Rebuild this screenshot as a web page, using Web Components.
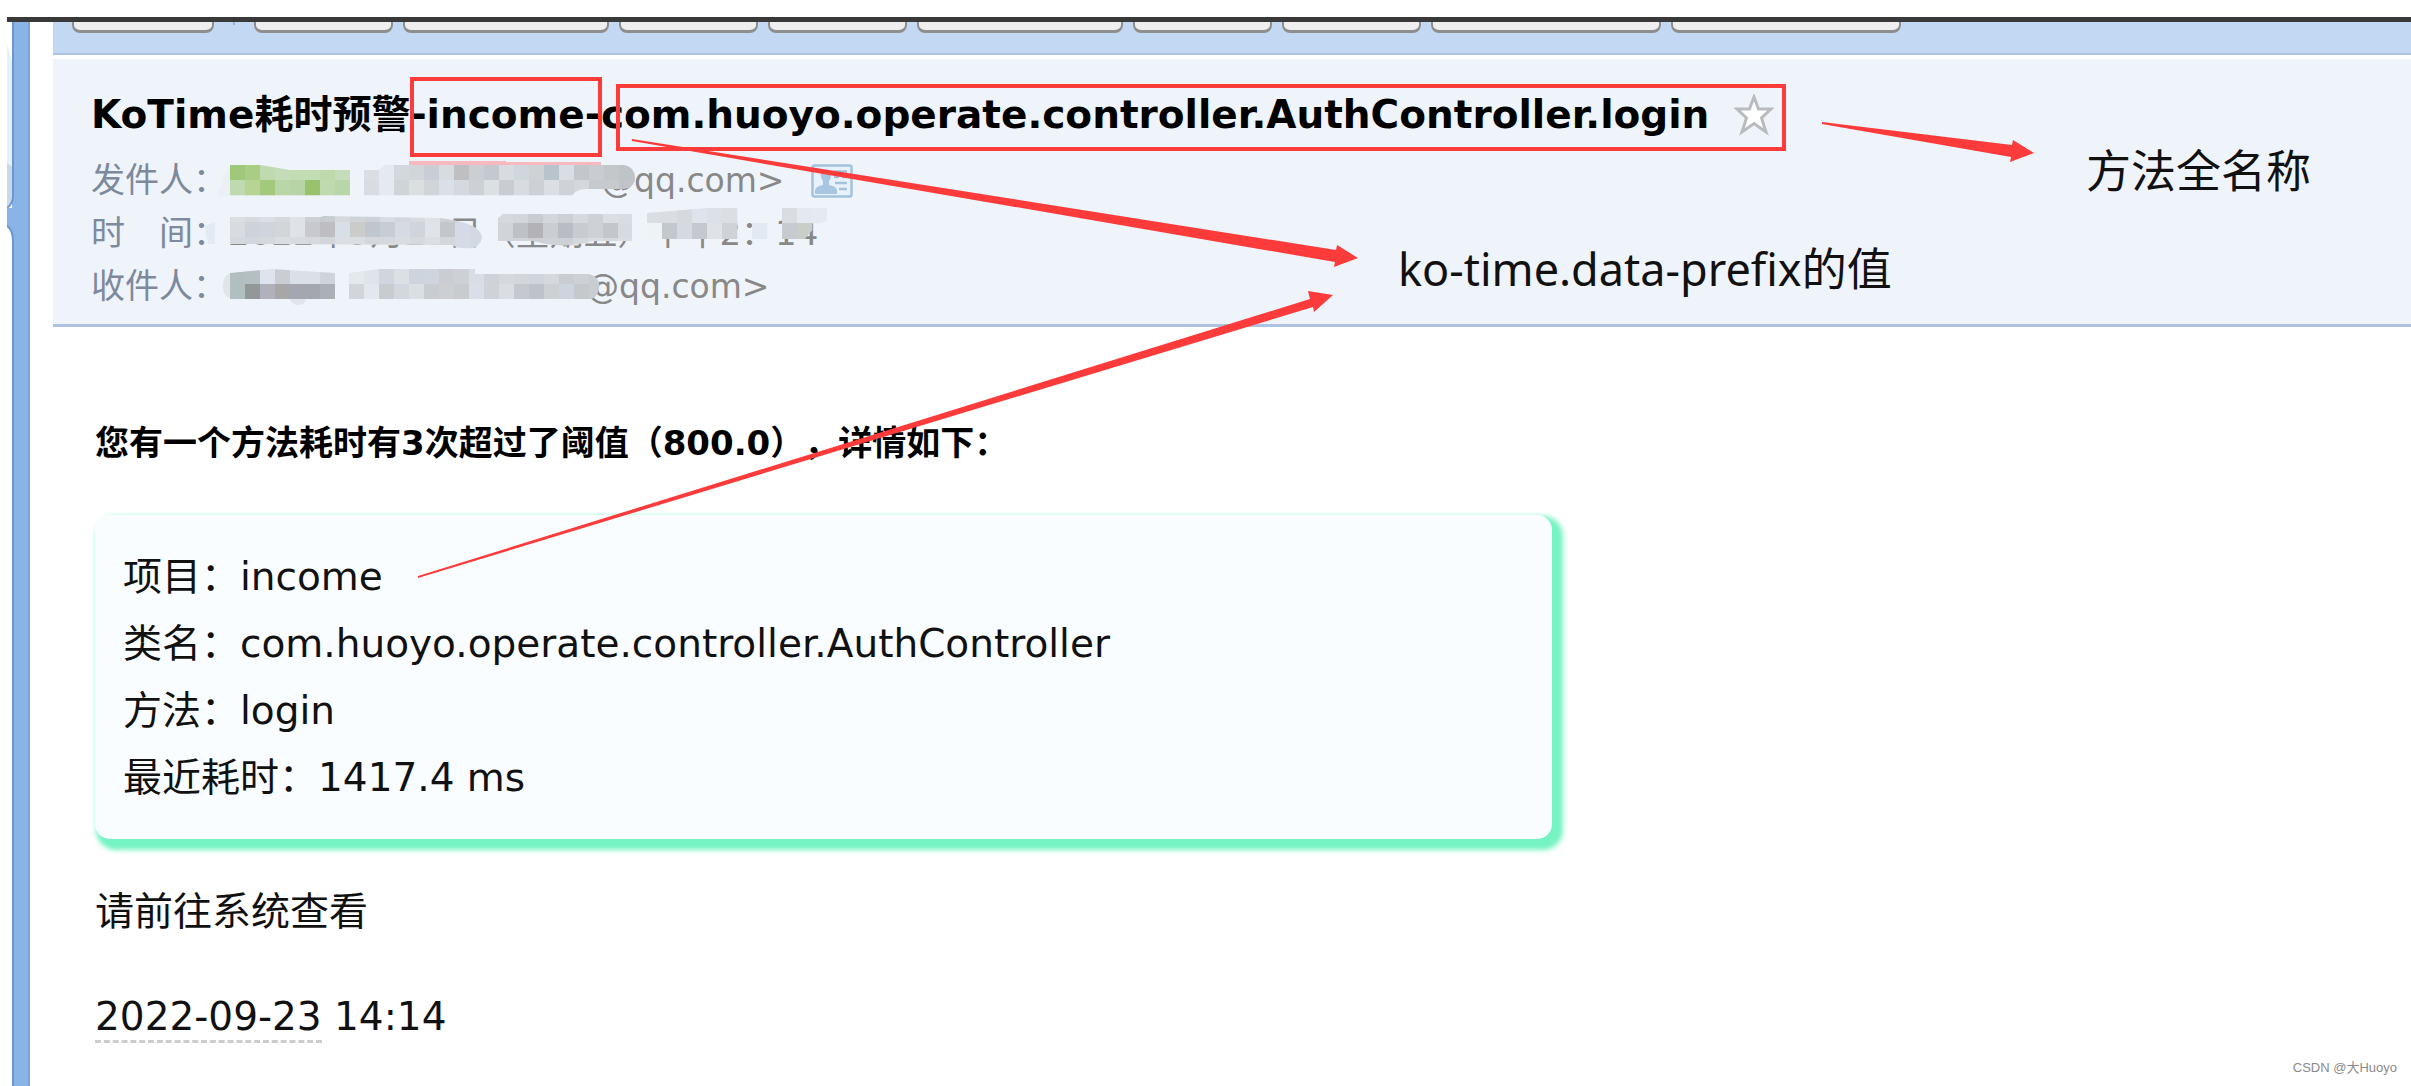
<!DOCTYPE html>
<html lang="zh-CN">
<head>
<meta charset="utf-8">
<title>KoTime耗时预警</title>
<style>
body{margin:0;background:#fff;color:#111;font-family:"DejaVu Sans","Noto Sans CJK SC",sans-serif}
</style>
</head>
<body>
<mail-app></mail-app>
<script>
const define=(name,html)=>customElements.define(name,class extends HTMLElement{
  constructor(){super();this.attachShadow({mode:'open'}).innerHTML=html;}
});

// Mosaic patch: rows of 15px cells clipped to a hand-brushed outline
customElements.define('pixel-mask',class extends HTMLElement{
  connectedCallback(){
    const rows=this.dataset.cells.split('/').map(r=>r.trim().split(/\s+/));
    const edge=this.dataset.edge||'';
    const w=rows[0].length*15,id='c'+Math.random().toString(36).slice(2);
    const h=(this.dataset.rows||'15,15').split(',').map(Number);
    let y=0,s='';
    rows.forEach((r,j)=>{r.forEach((c,i)=>{if(c!=='-')s+=`<rect x="${i*15}" y="${y}" width="15.3" height="${h[j]+.3}" fill="#${c}"/>`});y+=h[j];});
    this.attachShadow({mode:'open'}).innerHTML=`<style>:host{display:block;position:absolute;white-space:normal;line-height:0}svg{display:block;overflow:visible}</style><svg width="${w}" height="${y}" aria-hidden="true"><defs><clipPath id="${id}"><path d="${this.dataset.clip||`M0 0H${w}V${y}H0Z`}"/></clipPath></defs>${edge}<g clip-path="url(#${id})">${s}</g></svg>`;
  }
});

define('side-rail',`<style>
:host{display:flex;flex-direction:column;width:24px;flex:none}
svg{display:block}
.rail{flex:1;margin-left:5px;width:18px;box-sizing:border-box;background:#8ab3e7;border-left:2px solid #6b97d0;border-right:2px solid #7ba5dc}
</style>
<svg width="24" height="220" viewBox="0 0 24 220" aria-hidden="true">
<path d="M5 0H23V220H5Z" fill="#8ab3e7"/><path d="M21 0H23V220H21Z" fill="#7ba5dc"/>
<path d="M0 0H6V176Q6 182 0 186Z" fill="#fff"/><path d="M0 22L6 42V145L0 141Z" fill="#e6f0f8"/><path d="M0 141L6 145V176Q6 182 0 186Z" fill="#c9d9e8"/>
<path d="M0 186V204Q7 207 7 218V220H5V186Z" fill="#8ab3e7"/><path d="M0 204Q6 207 6 216V220H0Z" fill="#fff"/>
<path d="M6 0V174Q6 182 0 186M0 204Q6 207 6 220" fill="none" stroke="#6b97d0" stroke-width="2"/>
</svg><div class="rail"></div>`);

define('tool-button',`<style>
:host{display:block;flex:none}
button{display:block;box-sizing:border-box;width:100%;height:32px;margin:0;border:2px solid #8e8e8e;border-bottom-width:3px;border-radius:8px;background:#efefef}
</style><button type="button" aria-label="操作"></button>`);

define('tool-bar',`<style>
:host{display:flex;align-items:flex-end;gap:10px;overflow:hidden;padding:0 0 20px 19px;box-sizing:border-box;height:33px;background:#c3d8f2;border-bottom:2px solid #adc3e1}
.sep{width:2px;height:11px;margin:0 9px;flex:none}
.sep::before{content:"";display:block;width:2px;height:3px;background:#9fb0c8}
tool-button{width:139px}.first{width:142px}.m{width:206px}.l{width:230px}
</style>
<tool-button class="first"></tool-button><span class="sep"></span><tool-button></tool-button><tool-button class="m"></tool-button><tool-button></tool-button><tool-button></tool-button><tool-button class="m"></tool-button><tool-button></tool-button><tool-button></tool-button><tool-button class="l"></tool-button><tool-button class="l"></tool-button>`);

define('meta-row',`<style>
:host{display:flex;position:relative;font-size:34px;line-height:53px;white-space:pre;color:#888}
.label{color:#7d899c;width:137px;flex:none}
.value{display:flex;align-items:center;white-space:normal}
</style><span class="label"><slot name="label"></slot></span><span class="value"><slot></slot></span>`);

define('mail-head',`<style>
:host{display:block;box-sizing:border-box;border-top:4px solid #fff;border-bottom:3px solid #aec3e1;background:#eff4fb;padding:26px 38px 11px}
h1{display:flex;align-items:center;margin:0 0 9px;font-size:39px;line-height:60px;font-weight:700;color:#000;white-space:nowrap}
button{border:0;background:none;padding:0;margin-left:25px;display:block}
svg{display:block}
.gap1{width:373px}.gap3{width:358px}
.addr{font-size:33px}
.card{margin-left:26px}
</style>
<h1><span>KoTime耗时预警-income-com.huoyo.operate.controller.AuthController.login</span>
<button type="button" aria-label="星标"><svg width="40" height="42" viewBox="0 0 40 42"><path d="M20 3L24.500 15H37L27.500 24L32 38L20 29.500L8 38L12.500 24L3 15H15.500Z" fill="#fff" stroke="#b9bbbe" stroke-width="3"/></svg></button></h1>
<meta-row><span slot="label">发件人：</span><span class="gap1"></span><span class="addr">@qq.com&gt;</span>
<svg class="card" width="42" height="34" viewBox="0 0 42 34" aria-hidden="true"><rect x="1.500" y="1.500" width="39" height="31" rx="2" fill="#e9f2fa" stroke="#a3c2de" stroke-width="2.500"/><path d="M4 30V26Q5 22 12 21V17Q9 13 10 10Q11 6 15 6Q20 6 20 11Q20 15 18 17V21Q25 22 26 26V30Z" fill="#a8c6e2"/><path d="M23 7.500H36M23 13H28M31 13H36M24 19H36M28 25H36" stroke="#a3c2de" stroke-width="2.500"/></svg>
<pixel-mask style="left:139px;top:11px" data-edge="<path d='M-12 32Q-14 24 -8 20Q-7 4 6 0V30Z' fill='#eaf0f5'/>" data-rows="15,15" data-clip="M0 0L30 0L60 5H120V31H0Z" data-cells="a0c87a aacd85 bfdaae c4dcb9 c2dcb4 c2dcb4 bfd9ac c5ddba/bfdab0 b7d494 a3c97c b9d6a6 b7d4a6 99c26c c0dab0 b9d6a9"></pixel-mask>
<pixel-mask style="left:273px;top:11px" data-edge="<path d='M45 -4H142V-3H237V2H45Z' fill='#f6b9bf'/>" data-rows="15,15" data-clip="M0 5H15L20 0H260Q271 2 271 13Q270 24 258 24H222Q212 24 208 31H0Z" data-cells="dbdfe4 e4e9f2 d3d8de d3d6d9 c9ced6 d8dce1 bfbfc2 cbcfd4 c4c9d0 d8dce0 cfd6dc cfd2d5 b9c3cc d8dee4 c3c6ca c9cdd2 c4c7ca bec3c8 bec3c8/d9dde1 e4e9f2 cfd4d9 dbdfe0 d1d5da dbdfe7 d5d9df cdd1d6 dbe0e3 c9cdd2 d8dce1 cdd1d5 dbdfe4 cfd3d8 d4d8dc c6cacf c7cacd c0c4c9 c0c4c9"></pixel-mask>
</meta-row>
<meta-row><span slot="label">时　间：</span><span>2022年9月23日（星期五）下午2：14</span>
<pixel-mask style="left:139px;top:9px" data-edge="<path d='M-25 10L-15 6V28H-22Z' fill='#e4eaf3'/>" data-rows="6,15,11" data-clip="M0 1H90L95 0L210 2Q252 7 252 22Q250 32 238 33Q230 33 222 29L0 28Z" data-cells="dcdfe2 d7dbe0 dbdfe3 d5d9dd dfe3e8 cdd1d6 c8ccd0 d6dadf d0d4d8 ced2d6 d8dce3 d3d7dc d8dce1 dfe3e7 cdd1d6 d2d6dc d7dce4/d8dbdf cdd3da d0d4dc d3d6d9 dfe3e8 c7c9ce bebec2 d8dfe6 cbccc9 c0c6ce c8ccd3 d6dae2 d0d5db e0e4e8 c3c7cc d5dbe6 d3d8e2/d5d8dc d3d7dc d5d9dd dadde1 d8dce1 d6dade d2d6db dbdfe3 dadde2 d4d8dd d5d9dd d9dde1 d6dade dbdfe3 d3d7dc d5dbe6 d3d8e2"></pixel-mask>
<pixel-mask style="left:407px;top:7px" data-rows="9,15,11" data-clip="M0 4L5 0H134V27H95Q70 34 48 30L35 27H0Z" data-cells="d5d9dd d3d7dc c9cdd2 d3d7db cdd1d6 d6dade ced2d6 dbdfe4 d9dde3/d1d5da bec2c6 b3b3b7 cacdd2 b9bcc2 c8ccd0 ced2d6 c3c7cb d6dbe1/d1d5da d0d4d8 cdcfd3 cfd3d7 cdd1d6 d4d8db dadde0 d6dade dadee2"></pixel-mask>
<pixel-mask style="left:556px;top:1px" data-rows="15,17" data-clip="M0 5L60 0H180V12Q165 20 158 31H0Z" data-cells="dadee3 dadee3 d6dade dfe3ec dce1e9 dbdfe3 - - - d9dde1 e4e8f0 e4e9f2/eff3f5 c3c8cc d5dae0 c5c9cf dfe3e8 cfd3d7 - e3e9f3 - c7cbcf c9cec9 -"></pixel-mask>
</meta-row>
<meta-row><span slot="label">收件人：</span><span class="gap3"></span><span class="addr">@qq.com&gt;</span>
<pixel-mask style="left:139px;top:9px" data-edge="<path d='M0 4Q-8 8 -7 19Q-6 28 0 29Z M60 29H76Q76 36 68 36Q61 36 60 29Z' fill='#e0e5ea'/>" data-clip="M0 4L42 0L105 4V30H0Z" data-cells="b1bfc0 b4bfc1 dfe3ed cacdd2 dbe0e7 dbe0e6 cfd4da/b1bfc0 929898 b0b1ba a8a6a7 a4a7b0 a4a7b0 abb0b7"></pixel-mask>
<pixel-mask style="left:258px;top:9px" data-clip="M0 4L30 0H126V5H240Q252 8 250 20Q248 30 240 30H0Z" data-cells="e4e9ec dfe4ea d1d5de dbe0e4 cfd3de cfd5dd cbcdd2 cdd1d6 d8dde6 cfd3d8 d5d9dd d3d7dc cfd5df d5d9de c9cdd2 cdd1d5 c9cdd1/d2d5da e3e7ee c8cccf d3d8df dadfe1 c9cdd2 cecfd2 c8cccf d9dfe9 cfd3d8 dadee2 c5c9cf bdc2cb cdd1d4 cdd4de c5c9cc c9cdd1"></pixel-mask>
</meta-row>`);

define('info-card',`<style>
:host{display:block;box-sizing:border-box;width:1457px;max-width:100%;padding:28px;background:#f9fdff;border-radius:15px;box-shadow:6px 6px 5px 5px #76f3c2;font-size:39px;line-height:67px}
</style><slot></slot>`);

define('mail-body',`<style>
:host{display:block;padding:89px 42px 0;font-size:39px;line-height:67px}
h2{margin:0 0 45px;font-size:34px;line-height:54px;font-weight:700;color:#000;text-spacing-trim:space-all}
p{margin:0}
.go{margin-top:39px}
.date{margin-top:38px}
.date a{color:inherit;text-decoration:none;display:inline-block;line-height:46px;border-bottom:3px dashed #ccc}
</style>
<h2>您有一个方法耗时有3次超过了阈值（800.0），详情如下：</h2>
<info-card><p>项目：income</p><p>类名：com.huoyo.operate.controller.AuthController</p><p>方法：login</p><p>最近耗时：1417.4 ms</p></info-card>
<p class="go">请前往系统查看</p>
<p class="date"><a href="#">2022-09-23</a> 14:14</p>`);

// Red frames, arrows and captions floating over the message
define('mark-layer',`<style>
:host{position:absolute;inset:0;pointer-events:none;overflow:hidden}
svg{position:absolute;left:0;top:0}
.frame{position:absolute;box-sizing:border-box;border:4px solid #fd3b3b}
.note{position:absolute;font:45px/60px "Noto Sans","Noto Sans CJK SC",sans-serif;color:#111;white-space:nowrap}
.mark{position:absolute;right:14px;bottom:8px;font:13px/20px "Liberation Sans","Noto Sans CJK SC",sans-serif;color:#8a8a8a}
</style>
<div class="frame" style="left:410px;top:77px;width:192px;height:80px"></div>
<div class="frame" style="left:616px;top:84px;width:1170px;height:67px"></div>
<svg width="2100" height="700" fill="#fd3b3b" aria-hidden="true">
<path d="M632 139L1336 250L1337 245L1358 258L1334 267L1335 262L632 141Z"/>
<path d="M418 576L1310 299L1308 291L1333 295L1314 312L1313 307L418 578Z"/>
<path d="M1822 122L2012 145L2013 140L2034 153L2010 162L2011 157L1822 124Z"/>
</svg>
<span class="note" style="left:2086px;top:141px">方法全名称</span>
<span class="note" style="left:1398px;top:239px">ko-time.data-prefix的值</span>
<span class="mark">CSDN @大Huoyo</span>`);

define('mail-app',`<style>
:host{display:flex;flex-direction:column;position:relative;box-sizing:border-box;min-height:100vh;padding:17px 0 0 7px}
.top{height:5px;background:#393939}
.cols{display:flex;flex:1}
main{flex:1;min-width:0;margin-left:22px}
</style>
<div class="top"></div>
<div class="cols"><side-rail></side-rail><main><tool-bar></tool-bar><mail-head></mail-head><mail-body></mail-body></main></div>
<mark-layer></mark-layer>`);
</script>
</body>
</html>
